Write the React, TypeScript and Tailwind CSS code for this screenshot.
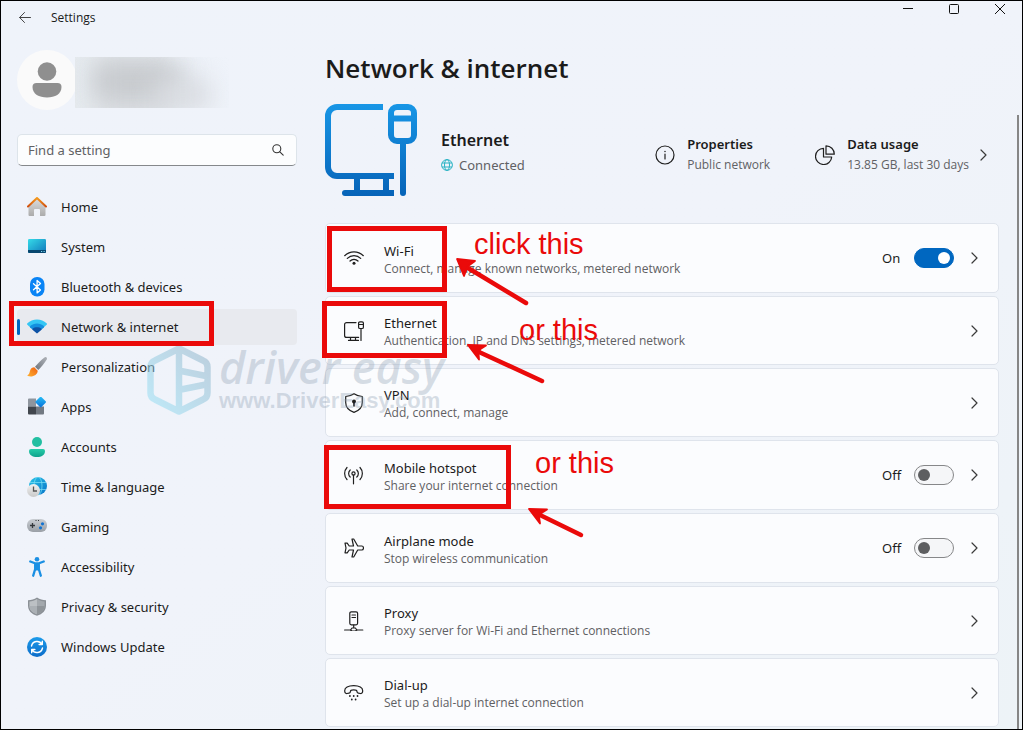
import { useState } from "react";
import type { ReactNode } from "react";

/* ---------- sidebar icons ---------- */

const HomeIcon = () => (
  <svg width="20" height="20" viewBox="0 0 20 20">
    <defs>
      <linearGradient id="homeWall" x1="0" y1="0" x2="0" y2="1">
        <stop offset="0" stopColor="#dedede" />
        <stop offset="1" stopColor="#ababab" />
      </linearGradient>
      <linearGradient id="homeRoof" x1="0" y1="0" x2="0" y2="1">
        <stop offset="0" stopColor="#f59a1c" />
        <stop offset="1" stopColor="#d1500f" />
      </linearGradient>
    </defs>
    <path d="M1.500 8 10 1 18.500 8v10a1 1 0 0 1-1 1H13v-6a1 1 0 0 0-1-1H8a1 1 0 0 0-1 1v6H2.500a1 1 0 0 1-1-1z" fill="url(#homeWall)" />
    <path d="M1 9.500 10 1 19 9.500" fill="none" stroke="url(#homeRoof)" strokeWidth="2" strokeLinecap="round" strokeLinejoin="round" />
  </svg>
);

const SystemIcon = () => (
  <svg width="20" height="20" viewBox="0 0 20 20">
    <defs>
      <linearGradient id="sysScreen" x1="0" y1="0" x2="1" y2="1">
        <stop offset="0" stopColor="#35dbe8" />
        <stop offset="1" stopColor="#0f76bb" />
      </linearGradient>
    </defs>
    <rect x="1" y="2" width="18" height="14" rx="1.200" fill="url(#sysScreen)" />
    <path d="M1 13h18v1.800a1.200 1.200 0 0 1-1.200 1.200H2.200A1.200 1.200 0 0 1 1 14.800z" fill="#07476f" />
    <path d="M14 14h1.200v1H14zM16.500 14h1.200v1h-1.200z" fill="#7fd6f2" />
  </svg>
);

const BluetoothIcon = () => (
  <svg width="20" height="20" viewBox="0 0 20 20">
    <rect x="3" y="0" width="14.500" height="19.500" rx="7" fill="#0a84f5" />
    <path d="m6.500 6.700 7 6.200-3.400 3V3.500l3.400 3-7 6.200" fill="none" stroke="#fff" strokeWidth="1.300" strokeLinejoin="round" strokeLinecap="round" />
  </svg>
);

const NetworkIcon = () => (
  <svg width="20" height="20" viewBox="0 0 20 20">
    <path d="M10 2.500C6.300 2.500 2.900 3.900.4 6.300c-.5.500-.5 1 0 1.500L2.500 9.800h15l2.100-2c.5-.5.5-1 0-1.500C17.100 3.900 13.700 2.500 10 2.500z" fill="#35c6f4" />
    <path d="M10 6.500c-2.600 0-5 1-6.800 2.600-.5.500-.5.900-.1 1.300L5.500 12.500h9l2.400-2.100c.4-.4.4-.8-.1-1.300C15 7.500 12.600 6.500 10 6.500z" fill="#1490df" />
    <path d="M10 10.300c-1.700 0-3.200.5-4.400 1.400-.4.300-.4.800-.1 1.100l3.800 3.300c.4.400 1 .4 1.400 0l3.800-3.300c.3-.3.3-.8-.1-1.100-1.200-.9-2.700-1.400-4.400-1.400z" fill="#0d52a5" />
  </svg>
);

const BrushIcon = () => (
  <svg width="20" height="20" viewBox="0 0 20 20">
    <defs>
      <linearGradient id="brushHandle" x1="0" y1="1" x2="1" y2="0">
        <stop offset="0" stopColor="#6d737c" />
        <stop offset="1" stopColor="#b0b4ba" />
      </linearGradient>
      <linearGradient id="brushTip" x1="1" y1="0" x2="0" y2="1">
        <stop offset="0" stopColor="#ef6012" />
        <stop offset="1" stopColor="#ffb02e" />
      </linearGradient>
    </defs>
    <path d="M19.500.4c.7.700.6 1.600.1 2.400-2.400 3.800-5.400 7.400-8.300 10.200L8 9.700C11 6.400 14.200 3 17.400.5c.8-.6 1.500-.7 2.100-.1z" fill="url(#brushHandle)" />
    <path d="M7.300 10.300 10.700 13.700c-.2 4.300-5 6.700-9.800 5.400-.6-.2-.6-.8-.1-1 1.700-.9 1.600-2.500 2.300-4.500.7-2.200 2.300-3.300 4.200-3.300z" fill="url(#brushTip)" />
  </svg>
);

const AppsIcon = () => (
  <svg width="20" height="20" viewBox="0 0 20 20">
    <defs>
      <linearGradient id="appsTile" x1="0" y1="0" x2="1" y2="1">
        <stop offset="0" stopColor="#28c0f7" />
        <stop offset="1" stopColor="#0870d8" />
      </linearGradient>
    </defs>
    <path d="M2 1.500h7v8H1v-7a1 1 0 0 1 1-1z" fill="#8e959e" />
    <path d="M1 9.500h8v8H2a1 1 0 0 1-1-1z" fill="#41464d" />
    <path d="M9 9.500h8v7a1 1 0 0 1-1 1H9z" fill="#727982" />
    <rect x="9.700" y="1" width="8" height="8" rx="1" transform="rotate(45 13.700 5)" fill="url(#appsTile)" />
  </svg>
);

const AccountsIcon = () => (
  <svg width="20" height="20" viewBox="0 0 20 20">
    <defs>
      <linearGradient id="accBody" x1="0" y1="0" x2="0" y2="1">
        <stop offset="0" stopColor="#27cda9" />
        <stop offset="1" stopColor="#10a28d" />
      </linearGradient>
    </defs>
    <circle cx="10" cy="5" r="5" fill="#22bfa2" />
    <path d="M4 12h12a2 2 0 0 1 2 2c0 4-3.500 6-8 6s-8-2-8-6a2 2 0 0 1 2-2z" fill="url(#accBody)" />
  </svg>
);

const TimeIcon = () => (
  <svg width="20" height="20" viewBox="0 0 20 20">
    <defs>
      <linearGradient id="timeGlobe" x1="0" y1="0" x2="1" y2="1">
        <stop offset="0" stopColor="#29c5e8" />
        <stop offset="1" stopColor="#0873c8" />
      </linearGradient>
      <linearGradient id="timeFace" x1="0" y1="0" x2="0" y2="1">
        <stop offset="0" stopColor="#f1f1f1" />
        <stop offset="1" stopColor="#c9c9c9" />
      </linearGradient>
    </defs>
    <circle cx="11" cy="9" r="9" fill="url(#timeGlobe)" />
    <g fill="none" stroke="#7fe3f7" strokeWidth=".7">
      <ellipse cx="11" cy="9" rx="4" ry="9" />
      <path d="M3 5.500h16M2 12.500h17" />
    </g>
    <circle cx="6.500" cy="13.500" r="6.500" fill="url(#timeFace)" />
    <path d="M6.500 9.500v4.500H10" fill="none" stroke="#555" strokeWidth="1.300" />
  </svg>
);

const GamingIcon = () => (
  <svg width="20" height="20" viewBox="0 0 20 20">
    <defs>
      <linearGradient id="gamePad" x1="0" y1="0" x2="0" y2="1">
        <stop offset="0" stopColor="#c9cdd2" />
        <stop offset="1" stopColor="#9a9fa6" />
      </linearGradient>
    </defs>
    <rect x="0" y="2" width="20" height="13" rx="6" fill="url(#gamePad)" />
    <path d="M5.500 6v5M3 8.500h5" stroke="#34383d" strokeWidth="1.300" />
    <path d="M8.500 3.500h1M11 3.500h1" stroke="#34383d" />
    <circle cx="15.500" cy="6.800" r="1.600" fill="#1373d1" />
    <circle cx="13.500" cy="10.800" r="1.600" fill="#1373d1" />
  </svg>
);

const AccessibilityIcon = () => (
  <svg width="20" height="20" viewBox="0 0 20 20">
    <circle cx="10" cy="2.300" r="2.300" fill="#1a8fe3" />
    <path d="M3.300 4.500 8 6.300h4l4.700-1.800M8.200 7v5l-2 6.700M11.800 7v5l2 6.700" fill="none" stroke="#1a8fe3" strokeWidth="2.300" strokeLinecap="round" strokeLinejoin="round" />
    <path d="M7.500 6h5v7.500h-5z" fill="#1a8fe3" />
  </svg>
);

const ShieldIcon = () => (
  <svg width="20" height="20" viewBox="0 0 20 20">
    <path d="M10 .5c2.800 1.900 5.700 2.700 9 2.800v5.200c0 5.200-3.400 8.500-9 10.300C4.400 17 1 13.700 1 8.500V3.300C4.300 3.200 7.200 2.400 10 .5z" fill="#8b9096" />
    <path d="M10 2c2.400 1.500 4.900 2.200 7.600 2.400v4.100c0 4.200-2.700 7-7.600 8.700z" fill="#a3a8ad" />
    <path d="M10 2C7.600 3.500 5.100 4.200 2.400 4.400v4.100c0 4.200 2.700 7 7.600 8.700z" fill="#bcc0c4" />
    <path d="M2.400 9H10v8.200C5.500 15.500 2.700 13 2.400 9z" fill="#abb0b5" />
    <path d="M10 9h7.600c-.3 4-3.100 6.500-7.600 8.200z" fill="#8f9499" />
  </svg>
);

const UpdateIcon = () => (
  <svg width="20" height="20" viewBox="0 0 20 20">
    <defs>
      <linearGradient id="updDisc" x1="0" y1="0" x2="0" y2="1">
        <stop offset="0" stopColor="#1c9bea" />
        <stop offset="1" stopColor="#0c6cc9" />
      </linearGradient>
    </defs>
    <circle cx="10" cy="10" r="10" fill="url(#updDisc)" />
    <g fill="none" stroke="#fff" strokeWidth="1.400" strokeLinecap="round" strokeLinejoin="round">
      <path d="M4.500 9A5.700 5.700 0 0 1 15 7.300M15.300 4.300v3.200h-3.200" />
      <path d="M15.500 11A5.700 5.700 0 0 1 5 12.700M4.700 15.700v-3.200h3.200" />
    </g>
  </svg>
);

/* ---------- row icons ---------- */

const Line = ({ children }: { children: ReactNode }) => (
  <svg width="20" height="20" viewBox="0 0 20 20" fill="none" stroke="#1f1f1f" strokeWidth="1.200" strokeLinecap="round" strokeLinejoin="round" className="shrink-0">
    {children}
  </svg>
);

const WifiLine = () => (
  <Line>
    <path d="M.7 7.700a13.200 13.200 0 0 1 18.600 0M3.300 10.400a9.500 9.500 0 0 1 13.400 0M6 13a5.600 5.600 0 0 1 8 0" />
    <circle cx="10" cy="15.200" r="1.500" fill="#1f1f1f" stroke="none" />
  </Line>
);

const EthernetLine = () => (
  <Line>
    <path d="M12 1.600H2.600a2 2 0 0 0-2 2v10.800a2 2 0 0 0 2 2h12M6.500 16.500v3M11.500 16.500v3M4.500 19.400h10" />
    <rect x="14.600" y=".8" width="4.800" height="6.700" rx="1.300" />
    <path d="M14.600 3.500h4.800M17 7.500v11.900" />
  </Line>
);

const VpnLine = () => (
  <Line>
    <path d="M10 .8c2.600 1.900 5.300 2.600 8.300 2.700v6c0 5-3.200 8.100-8.300 9.900-5.100-1.800-8.300-4.900-8.300-9.900v-6C4.700 3.400 7.400 2.700 10 .8z" />
    <circle cx="10" cy="8.500" r="2" fill="#1f1f1f" stroke="none" />
    <path d="M10 9v4" strokeWidth="1.600" />
  </Line>
);

const HotspotLine = () => (
  <Line>
    <circle cx="9.500" cy="8.500" r="1.600" />
    <path d="M9.500 10.200v8.600M6.200 12a4.700 4.700 0 0 1 0-7M12.800 12a4.700 4.700 0 0 0 0-7M3 14.500a8.800 8.800 0 0 1 0-12M16 14.500a8.800 8.800 0 0 0 0-12" />
  </Line>
);

const PlaneLine = () => (
  <Line>
    <path d="M8 1h1.700l4 7H17.800c2.200 0 2.200 4 0 4H13.700l-4 7H8l1.500-7H5.200l-2 2.800H1l1-4.800L1 5.200h2.200L5.200 8h4.300z" />
  </Line>
);

const ProxyLine = () => (
  <Line>
    <rect x="5.800" y=".8" width="7.800" height="13" rx="1.500" />
    <path d="M8 4h3.500M8 6.500h3.500M9.700 14v2.500M.6 19h6M12.800 19h6" />
    <path d="M6.600 19 8 17h3.400l1.400 2-1.400 1H8z" />
  </Line>
);

const DialLine = () => (
  <Line>
    <path d="M9.700 2.600c5.600 0 9 2.200 9 5.200 0 1.900-.8 2.900-2.200 2.700l-2.200-.4c-1-.2-1.300-.8-1.300-1.700 0-1.100-.6-1.500-3.300-1.500s-3.300.4-3.300 1.500c0 .9-.3 1.500-1.300 1.700l-2.200.4C1.500 10.700.7 9.700.7 7.800c0-3 3.400-5.200 9-5.200z" />
    <path d="M5.900 13h.01M9.700 13h.01M13.500 13h.01M7.800 16.500h.01M11.600 16.500h.01" strokeWidth="1.800" />
  </Line>
);

const Chevron = () => (
  <svg width="12" height="14" viewBox="0 0 12 14" fill="none" stroke="#3a3a3a" strokeWidth="1.200" strokeLinecap="round" strokeLinejoin="round" className="shrink-0">
    <path d="M4 2l5 5-5 5" />
  </svg>
);

/* ---------- data ---------- */

const navItems = [
  { label: "Home", icon: <HomeIcon /> },
  { label: "System", icon: <SystemIcon /> },
  { label: "Bluetooth & devices", icon: <BluetoothIcon /> },
  { label: "Network & internet", icon: <NetworkIcon />, active: true },
  { label: "Personalization", icon: <BrushIcon /> },
  { label: "Apps", icon: <AppsIcon /> },
  { label: "Accounts", icon: <AccountsIcon /> },
  { label: "Time & language", icon: <TimeIcon /> },
  { label: "Gaming", icon: <GamingIcon /> },
  { label: "Accessibility", icon: <AccessibilityIcon /> },
  { label: "Privacy & security", icon: <ShieldIcon /> },
  { label: "Windows Update", icon: <UpdateIcon /> },
];

type Row = { title: string; text: string; icon: ReactNode; toggle?: boolean };

const rows: Row[] = [
  { title: "Wi-Fi", text: "Connect, manage known networks, metered network", icon: <WifiLine />, toggle: true },
  { title: "Ethernet", text: "Authentication, IP and DNS settings, metered network", icon: <EthernetLine /> },
  { title: "VPN", text: "Add, connect, manage", icon: <VpnLine /> },
  { title: "Mobile hotspot", text: "Share your internet connection", icon: <HotspotLine />, toggle: false },
  { title: "Airplane mode", text: "Stop wireless communication", icon: <PlaneLine />, toggle: false },
  { title: "Proxy", text: "Proxy server for Wi-Fi and Ethernet connections", icon: <ProxyLine /> },
  { title: "Dial-up", text: "Set up a dial-up internet connection", icon: <DialLine /> },
];

/* ---------- parts ---------- */

function SettingRow({ title, text, icon, toggle }: Row) {
  const [on, setOn] = useState(toggle ?? false);
  const hasToggle = toggle !== undefined;

  return (
    <div
      className={`flex items-center rounded-[5px] border border-[#dfe4ec] bg-[#fbfcfe] px-[18px] ${
        hasToggle ? "h-[70px]" : "h-[69px]"
      }`}
    >
      {icon}

      <div className="ml-5 flex-1 pt-[3px]">
        <h3 className="text-[13px] leading-[18px] text-[#1b1b1b]">{title}</h3>
        <p className="font-['Open_Sans'] text-[12px] leading-[18px] text-[#5f6063]">{text}</p>
      </div>

      {hasToggle && (
        <label className="mr-[14px] flex items-center gap-3 text-[13px] text-[#1b1b1b]">
          <span className="w-5 pt-[2px]">{on ? "On" : "Off"}</span>
          <input
            type="checkbox"
            role="switch"
            aria-label={title}
            checked={on}
            onChange={(e) => setOn(e.target.checked)}
            className="
              flex h-5 w-10 appearance-none items-center rounded-full
              border border-[#868789] bg-[#f5f6f8] px-[3px]
              before:size-3 before:rounded-full before:bg-[#5d5e60]
              checked:justify-end checked:border-[#0067c0] checked:bg-[#0067c0]
              checked:before:bg-white
            "
          />
        </label>
      )}

      <button aria-label={`Open ${title}`}>
        <Chevron />
      </button>
    </div>
  );
}

function Watermark() {
  return (
    <div className="pointer-events-none absolute left-[146px] top-[344px] flex items-start gap-2">
      <svg width="64" height="70" viewBox="0 0 64 70" className="opacity-60">
        <defs>
          <linearGradient id="wmHex" x1="0" y1="1" x2="1" y2="0">
            <stop offset="0" stopColor="#9fe3f7" />
            <stop offset="1" stopColor="#9bb8cc" />
          </linearGradient>
        </defs>
        <path
          d="M32 3.500 56 15.500a7 7 0 0 1 4.500 6.500v26a7 7 0 0 1-4.500 6.500L32 66.500 8 54.500A7 7 0 0 1 3.500 48V22A7 7 0 0 1 8 15.500zM32 4v62M34 26l25 5M34 44.500l25-5"
          fill="none"
          stroke="url(#wmHex)"
          strokeWidth="6.500"
          strokeLinejoin="round"
        />
      </svg>
      <div className="text-[#8fa0b3]/35">
        <p className="font-['Open_Sans'] text-[45px] font-semibold italic leading-[44px]">driver easy</p>
        <p className="font-['Liberation_Sans'] text-[22px] font-bold leading-6">www.DriverEasy.com</p>
      </div>
    </div>
  );
}

function Annotations() {
  return (
    <div className="pointer-events-none absolute inset-0 font-['Liberation_Sans'] text-[29px] leading-8 text-[#ea0a0a]">
      <div className="absolute left-[8px] top-[300px] h-[45px] w-[205px] border-5 border-[#ea0a0a]" />
      <div className="absolute left-[326px] top-[225px] h-[66px] w-[120px] border-5 border-[#ea0a0a]" />
      <div className="absolute left-[321px] top-[300px] h-[57px] w-[125px] border-5 border-[#ea0a0a]" />
      <div className="absolute left-[323px] top-[444px] h-[64px] w-[187px] border-5 border-[#ea0a0a]" />

      <p className="absolute left-[473px] top-[227px]">click this</p>
      <p className="absolute left-[518px] top-[313px]">or this</p>
      <p className="absolute left-[534px] top-[446px]">or this</p>

      {/* Arrows */}
      <svg width="76" height="50" viewBox="0 0 76 50" className="absolute left-[454px] top-[256px]">
        <path d="M13 11 71 46" stroke="#ea0a0a" strokeWidth="4.500" strokeLinecap="round" />
        <path d="M2 2 20 4 14.500 8 12 11 9 19z" fill="#ea0a0a" stroke="#ea0a0a" strokeWidth="1.800" strokeLinejoin="round" />
      </svg>
      <svg width="80" height="44" viewBox="0 0 80 44" className="absolute left-[465px] top-[342px]">
        <path d="M13 9 76 38" stroke="#ea0a0a" strokeWidth="4.500" strokeLinecap="round" />
        <path d="M2 2 20 2.500 14.500 6 12.500 9.500 13 16.500z" fill="#ea0a0a" stroke="#ea0a0a" strokeWidth="1.800" strokeLinejoin="round" />
      </svg>
      <svg width="60" height="32" viewBox="0 0 60 32" className="absolute left-[526px] top-[506px]">
        <path d="M13 8 54 28" stroke="#ea0a0a" strokeWidth="4.500" strokeLinecap="round" />
        <path d="M2 2 20 2.500 14.500 6 12 9.500 13 16.500z" fill="#ea0a0a" stroke="#ea0a0a" strokeWidth="1.800" strokeLinejoin="round" />
      </svg>
    </div>
  );
}

export default function App() {
  return (
    <div className="relative flex min-h-screen flex-col border border-black bg-linear-to-br from-[#eff3fa] via-[#f0f3fa] to-[#edf3f7] font-['Noto_Sans',sans-serif] text-[#1b1b1b]">

      {/* Title bar */}
      <header className="flex h-[34px] items-start justify-between">
        <div className="flex h-full items-center pl-[18px]">
          <button aria-label="Back">
            <svg width="12" height="12" viewBox="0 0 12 12" fill="none" stroke="#444" strokeLinecap="round" strokeLinejoin="round">
              <path d="M11.500 5.500H.7M5.500.5.600 5.500l4.900 5" />
            </svg>
          </button>
          <span className="ml-5 font-['Open_Sans'] text-[12px]">Settings</span>
        </div>

        <div className="-mr-px flex h-4 items-center">
          <button aria-label="Minimize" className="flex w-[46px] justify-center">
            <svg width="10" height="10" viewBox="0 0 10 10" stroke="#111"><path d="M0 4.500h10" /></svg>
          </button>
          <button aria-label="Maximize" className="flex w-[46px] justify-center">
            <svg width="10" height="10" viewBox="0 0 10 10" fill="none" stroke="#111"><rect x=".5" y=".5" width="9" height="9" rx="1" /></svg>
          </button>
          <button aria-label="Close" className="flex w-[46px] justify-center">
            <svg width="10" height="10" viewBox="0 0 10 10" stroke="#111"><path d="M0 0l10 10M10 0 0 10" /></svg>
          </button>
        </div>
      </header>

      <div className="flex flex-1">

        {/* Sidebar */}
        <aside className="ml-4 w-[280px] shrink-0 pt-[15px]">
          <div className="flex h-[60px] items-center">
            <div className="flex w-[58px] shrink-0 overflow-hidden">
              <svg width="60" height="60" viewBox="0 0 60 60" className="shrink-0">
                <circle cx="30" cy="30" r="30" fill="#fafafa" />
                <circle cx="30" cy="21.500" r="9.300" fill="#8f8f8f" />
                <path d="M19.500 33h21a4 4 0 0 1 4 4c0 7-6.500 10.500-14.500 10.500S15.500 44 15.500 37a4 4 0 0 1 4-4z" fill="#8f8f8f" />
              </svg>
            </div>
            <div className="relative mt-1 h-[51px] w-[154px] overflow-hidden bg-linear-to-r from-[#e6ebef] to-[#eff3fa]">
              <div className="absolute left-5 -top-1 h-16 w-[76px] bg-[#d5d8dc] blur-md" />
              <div className="absolute left-5 top-3 h-6 w-[90px] bg-[#c4c7cb] blur-md" />
              <div className="absolute left-20 top-6 h-7 w-14 bg-[#d9dce1] blur-md" />
            </div>
          </div>

          <label className="mt-6 flex h-8 items-center rounded-[5px] border border-[#dde4ea] border-b-[#85888b] bg-[#fcfdfe] pl-[10px] pr-3">
            <input
              type="text"
              aria-label="Find a setting"
              placeholder="Find a setting"
              className="min-w-0 flex-1 pt-px text-[13px] outline-none placeholder:text-[#606164]"
            />
            <svg width="12" height="12" viewBox="0 0 12 12" fill="none" stroke="#333" strokeWidth="1.100" strokeLinecap="round">
              <circle cx="4.800" cy="4.800" r="4" />
              <path d="m7.800 7.800 3.400 3.400" />
            </svg>
          </label>

          <nav className="mt-[23px] flex flex-col gap-1">
            {navItems.map((item) => (
              <a
                key={item.label}
                href="#"
                className={`relative flex h-9 items-center gap-[14px] rounded-[4px] pl-[10px] text-[13px] ${
                  item.active ? "bg-[#e8eaef]" : ""
                }`}
              >
                {item.active && <span className="absolute left-0 h-4 w-[3px] rounded-full bg-[#0067c0]" />}
                {item.icon}
                <span className="pt-[2px]">{item.label}</span>
              </a>
            ))}
          </nav>
        </aside>

        {/* Content */}
        <main className="min-w-0 flex-1 pl-7 pr-[18px] pt-[15px]">
          <h1 className="font-['Open_Sans'] text-[26px] font-semibold leading-9">Network &amp; internet</h1>

          <section className="mt-[18px] flex h-[92px] items-center">
            <svg width="92" height="92" viewBox="0 0 92 92" fill="none" stroke="url(#heroBlue)" strokeWidth="6" className="shrink-0">
              <defs>
                <linearGradient id="heroBlue" gradientUnits="userSpaceOnUse" x1="0" y1="0" x2="0" y2="92">
                  <stop offset="0" stopColor="#1896e6" />
                  <stop offset="1" stopColor="#0663b8" />
                </linearGradient>
              </defs>
              <path d="M58 3H12a9 9 0 0 0-9 9v51a9 9 0 0 0 9 9h57M32 73v14M61 73v14" />
              <path d="M20 89h49" />
              <circle cx="20" cy="89" r="3" fill="url(#heroBlue)" stroke="none" />
              <rect x="66" y="3" width="23" height="34" rx="6" />
              <path d="M67 14.500h21" />
              <path d="M78 39v50" strokeLinecap="round" />
            </svg>

            <div className="ml-6 flex-1 pt-1">
              <h2 className="text-[16px] font-semibold leading-6">Ethernet</h2>
              <p className="flex items-center gap-[6px] pt-px text-[13px] leading-6 text-[#606164]">
                <svg width="12" height="12" viewBox="0 0 12 12" fill="none" stroke="#2bb3c4">
                  <circle cx="6" cy="6" r="5.400" />
                  <ellipse cx="6" cy="6" rx="2.500" ry="5.400" />
                  <path d="M1 4h10M1 8h10" />
                </svg>
                Connected
              </p>
            </div>

            <button className="flex w-40 items-center gap-3 pt-[10px] text-left">
              <Line>
                <circle cx="10" cy="10" r="9" />
                <path d="M10 9v5" />
                <path d="M10 6.500h.01" strokeWidth="1.500" />
              </Line>
              <span>
                <span className="block text-[13px] font-semibold leading-5">Properties</span>
                <span className="block font-['Open_Sans'] text-[12px] leading-[22px] text-[#606164]">Public network</span>
              </span>
            </button>

            <button className="mr-[10px] flex items-center gap-2 pt-[10px] text-left">
              <Line>
                <path d="M8.500 3.300A8.100 8.100 0 1 0 16.700 12H8.500z" />
                <path d="M11 .8a8.300 8.300 0 0 1 8.300 8.400H11z" />
              </Line>
              <span className="pl-1">
                <span className="block text-[13px] font-semibold leading-5">Data usage</span>
                <span className="block font-['Open_Sans'] text-[12px] leading-[22px] text-[#606164]">13.85 GB, last 30 days</span>
              </span>
              <Chevron />
            </button>
          </section>

          <section className="mt-[27px] flex flex-col gap-[3px]">
            {rows.map((row) => (
              <SettingRow key={row.title} {...row} />
            ))}
          </section>
        </main>

        {/* Scroll thumb */}
        <div className="mr-[3px] mt-20 w-[2px] bg-[#868686]" />
      </div>

      <Watermark />
      <Annotations />
    </div>
  );
}
